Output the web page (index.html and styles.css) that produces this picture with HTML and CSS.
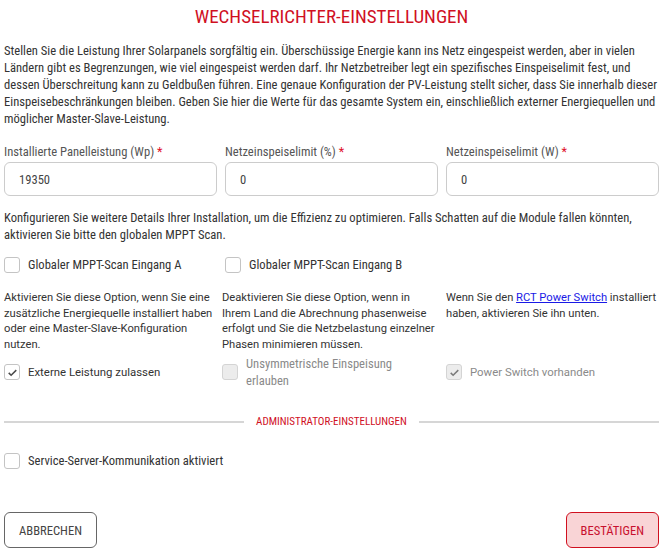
FILE: index.html
```html
<!DOCTYPE html>
<html lang="de">
<head>
<meta charset="utf-8">
<link rel="stylesheet" href="styles.css">
</head>
<body>
<div class="page">
  <h1 class="title">WECHSELRICHTER-EINSTELLUNGEN</h1>
  <p class="intro">Stellen Sie die Leistung Ihrer Solarpanels sorgfältig ein. Überschüssige Energie kann ins Netz eingespeist werden, aber in vielen Ländern gibt es Begrenzungen, wie viel eingespeist werden darf. Ihr Netzbetreiber legt ein spezifisches Einspeiselimit fest, und dessen Überschreitung kann zu Geldbußen führen. Eine genaue Konfiguration der PV-Leistung stellt sicher, dass Sie innerhalb dieser Einspeisebeschränkungen bleiben. Geben Sie hier die Werte für das gesamte System ein, einschließlich externer Energiequellen und möglicher Master-Slave-Leistung.</p>

  <div class="fields">
    <div class="field">
      <label class="field-label">Installierte Panelleistung (Wp) <span class="req">*</span></label>
      <div class="input">19350</div>
    </div>
    <div class="field">
      <label class="field-label">Netzeinspeiselimit (%) <span class="req">*</span></label>
      <div class="input">0</div>
    </div>
    <div class="field">
      <label class="field-label">Netzeinspeiselimit (W) <span class="req">*</span></label>
      <div class="input">0</div>
    </div>
  </div>

  <p class="intro intro2">Konfigurieren Sie weitere Details Ihrer Installation, um die Effizienz zu optimieren. Falls Schatten auf die Module fallen könnten, aktivieren Sie bitte den globalen MPPT Scan.</p>

  <div class="mppt">
    <div class="check"><span class="box"></span><span class="check-label">Globaler MPPT-Scan Eingang A</span></div>
    <div class="check"><span class="box"></span><span class="check-label">Globaler MPPT-Scan Eingang B</span></div>
  </div>

  <div class="cols">
    <div class="col">
      <p class="col-text">Aktivieren Sie diese Option, wenn Sie eine zusätzliche Energiequelle installiert haben oder eine Master-Slave-Konfiguration nutzen.</p>
      <div class="col-check"><div class="check"><span class="box"><svg viewBox="0 0 16 16" width="11" height="11"><path d="M2.5 8.5l3.5 3.5 7.5-7.5" fill="none" stroke="#4a4a4a" stroke-width="2.2"/></svg></span><span class="check-label reg">Externe Leistung zulassen</span></div></div>
    </div>
    <div class="col">
      <p class="col-text narrow">Deaktivieren Sie diese Option, wenn in Ihrem Land die Abrechnung phasenweise erfolgt und Sie die Netzbelastung einzelner Phasen minimieren müssen.</p>
      <div class="col-check"><div class="check disabled"><span class="box"></span><span class="check-label">Unsymmetrische Einspeisung<br>erlauben</span></div></div>
    </div>
    <div class="col">
      <p class="col-text">Wenn Sie den <a href="#" class="link">RCT Power Switch</a> installiert haben, aktivieren Sie ihn unten.</p>
      <div class="col-check"><div class="check disabled"><span class="box"><svg viewBox="0 0 16 16" width="11" height="11"><path d="M2.5 8.5l3.5 3.5 7.5-7.5" fill="none" stroke="#7a7a7a" stroke-width="2.2"/></svg></span><span class="check-label reg">Power Switch vorhanden</span></div></div>
    </div>
  </div>

  <div class="divider"><span class="divider-text">ADMINISTRATOR-EINSTELLUNGEN</span></div>

  <div class="check service"><span class="box"></span><span class="check-label">Service-Server-Kommunikation aktiviert</span></div>

  <div class="actions">
    <button class="btn">ABBRECHEN</button>
    <button class="btn primary">BESTÄTIGEN</button>
  </div>
</div>
</body>
</html>
```
FILE: styles.css
```css
* { box-sizing: border-box; }
html, body { margin: 0; padding: 0; background: #fff; }
body {
  font-family: "Roboto Condensed", Roboto, "Liberation Sans", sans-serif;
  color: #333;
  font-size: 12.6px;
}
.page {
  width: 660px;
  height: 549px;
  padding: 0 1px 0 4px;
  display: flex;
  flex-direction: column;
}
.title {
  margin: 5px 0 0;
  text-align: center;
  font-size: 19px;
  font-weight: 400;
  line-height: 24px;
  color: #d0101f;
}
.intro {
  margin: 13px 0 0;
  line-height: 17px;
  color: #333;
}
.fields {
  display: grid;
  grid-template-columns: repeat(3, 1fr);
  gap: 8px;
  margin-top: 16px;
}
.field { display: flex; flex-direction: column; }
.field-label { line-height: 17px; color: #555; margin-bottom: 2px; }
.req { color: #e0102a; }
.input {
  height: 34px;
  border: 1px solid #ccc;
  border-radius: 6px;
  padding: 0 14px;
  display: flex;
  align-items: center;
  color: #444;
}
.intro2 { margin-top: 13px; }
.mppt {
  display: grid;
  grid-template-columns: 221px 1fr;
  margin-top: 13px;
}
.check { display: flex; align-items: center; gap: 8px; }
.box {
  width: 16px;
  height: 16px;
  border: 1px solid #c4c4c4;
  border-radius: 3px;
  background: #fff;
  flex: none;
  display: flex;
  align-items: center;
  justify-content: center;
}
.check-label { line-height: 17px; color: #333; }
.check-label.reg, .col-text { font-family: Roboto, "Liberation Sans", sans-serif; }
.check-label.reg { font-size: 11.4px; }
.cols {
  display: grid;
  grid-template-columns: 218px 224px 1fr;
  margin-top: 17px;
}
.col { display: flex; flex-direction: column; }
.col-text {
  margin: 0;
  font-size: 11.2px;
  line-height: 15.5px;
  color: #333;
  height: 62px;
}
.col-text.narrow { padding-right: 6px; }
.link { color: #1a1ae6; text-decoration: underline; }
.col-check { height: 34px; display: flex; align-items: center; margin-top: 3px; }
.disabled .box { background: #ececec; border-color: #d4d4d4; }
.disabled .check-label { color: #8a8a8a; }
.divider {
  display: flex;
  align-items: center;
  gap: 12px;
  margin-top: 27px;
}
.divider::before, .divider::after {
  content: "";
  flex: 1;
  height: 2px;
  background: #d6d6d6;
}
.divider-text { font-size: 11px; color: #d0101f; line-height: 12px; }
.service { margin-top: 24px; }
.actions {
  margin-top: auto;
  display: flex;
  justify-content: space-between;
  padding-bottom: 1px;
}
.btn {
  font-family: "Roboto Condensed", Roboto, sans-serif;
  font-size: 12.6px;
  height: 36px;
  padding: 0 14px;
  border: 1px solid #666;
  border-radius: 6px;
  background: #fff;
  color: #444;
}
.btn.primary {
  background: #f9d4d6;
  border-color: #d0101f;
  color: #c8102e;
}
```
